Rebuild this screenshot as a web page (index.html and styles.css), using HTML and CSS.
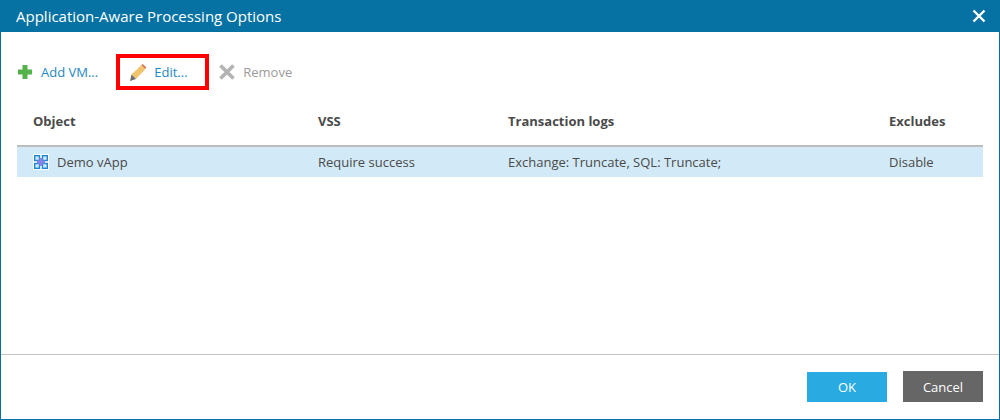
FILE: index.html
```html
<!DOCTYPE html>
<html lang="en">
<head>
    <meta charset="UTF-8">
    <title>Application-Aware Processing Options</title>
    <link rel="stylesheet" href="styles.css">
</head>
<body>

    <div class="dialog">
        <div class="titlebar">
            <span class="title">Application-Aware Processing Options</span>
            <svg class="close" width="14" height="14" viewBox="0 0 14 14"><path d="M1.5 1.5L12.5 12.5M12.5 1.5L1.5 12.5" stroke="#fff" stroke-width="2.4"/></svg>
        </div>

        <div class="toolbar">
            <a class="tool tool-add">
                <svg width="14" height="14" viewBox="0 0 14 14"><path d="M4.5 0h5v4.5H14v5H9.5V14h-5V9.5H0v-5h4.5z" fill="#53b34a"/></svg>
                <span>Add VM...</span>
            </a>
            <a class="tool tool-edit">
                <svg width="16" height="17" viewBox="0 0 16 17">
                    <path d="M1.5 10.5L11.5 1L15.5 5L6 15Z" fill="#f0c36d"/>
                    <path d="M11.5 1L12.5 0L16 3L15.5 5Z" fill="#d9694a"/>
                    <path d="M1.5 10.5L6 15L0 17Z" fill="#6e6e6e"/>
                </svg>
                <span>Edit...</span>
            </a>
            <a class="tool tool-remove">
                <svg width="16" height="16" viewBox="0 0 16 16"><path d="M1.5 1.5L14.5 14.5M14.5 1.5L1.5 14.5" stroke="#b4b4b4" stroke-width="3.8"/></svg>
                <span>Remove</span>
            </a>
        </div>

        <table class="grid">
            <thead>
                <tr>
                    <th class="col-object">Object</th>
                    <th class="col-vss">VSS</th>
                    <th class="col-logs">Transaction logs</th>
                    <th>Excludes</th>
                </tr>
            </thead>
            <tbody>
                <tr class="selected">
                    <td>
                        <span class="object-name">
                            <svg width="16" height="16" viewBox="0 0 16 16">
                                <rect width="16" height="16" fill="#fff"/>
                                <rect x="1.7" y="1.7" width="4.8" height="4.8" fill="#d2e9f7" stroke="#1b87cf" stroke-width="1.4"/>
                                <rect x="9.5" y="1.7" width="4.8" height="4.8" fill="#d2e9f7" stroke="#1b87cf" stroke-width="1.4"/>
                                <rect x="1.7" y="9.5" width="4.8" height="4.8" fill="#d2e9f7" stroke="#1b87cf" stroke-width="1.4"/>
                                <rect x="9.5" y="9.5" width="4.8" height="4.8" fill="#d2e9f7" stroke="#1b87cf" stroke-width="1.4"/>
                                <path d="M6.5 4h3v2.5H12v3H9.5V12h-3V9.5H4v-3h2.5z" fill="#8a84ea"/>
                            </svg>
                            Demo vApp
                        </span>
                    </td>
                    <td>Require success</td>
                    <td>Exchange: Truncate, SQL: Truncate;</td>
                    <td>Disable</td>
                </tr>
            </tbody>
        </table>

        <div class="footer">
            <button class="btn btn-ok">OK</button>
            <button class="btn btn-cancel">Cancel</button>
        </div>
    </div>

</body>
</html>
```

FILE: styles.css
```css
html, body {
    margin: 0;
    height: 100%;
}
body {
    font-family: "Open Sans", sans-serif;
    font-size: 13px;
    color: #4a4a4a;
    background-color: #fff;
}
.dialog {
    box-sizing: border-box;
    width: 1000px;
    height: 420px;
    border: 1px solid #0672a4;
    border-top: none;
    display: flex;
    flex-direction: column;
}
.titlebar {
    height: 32px;
    flex: none;
    margin: 0 -1px;
    background-color: #0672a4;
    color: #fff;
    display: flex;
    align-items: center;
    justify-content: space-between;
    padding: 0 14px 0 16px;
}
.title {
    font-size: 15px;
}
.close {
    display: block;
}
.toolbar {
    flex: none;
    display: flex;
    align-items: center;
    height: 36px;
    margin-top: 22px;
    padding-left: 17px;
}
.tool {
    display: flex;
    align-items: center;
    color: #2287c2;
}
.tool svg {
    display: block;
}
.tool-add svg {
    margin-right: 9px;
}
.tool-edit {
    box-sizing: border-box;
    height: 36px;
    width: 93px;
    margin-left: 18px;
    padding-left: 10px;
    border: 4px solid #f00;
}
.tool-edit svg {
    margin-right: 8px;
}
.tool-remove {
    margin-left: 10px;
    color: #9b9b9b;
}
.tool-remove svg {
    margin-right: 8px;
}
.grid {
    flex: none;
    width: 966px;
    margin: 0 0 0 16px;
    border-collapse: collapse;
    table-layout: fixed;
}
.grid th {
    height: 56px;
    padding: 0 0 15px 16px;
    box-sizing: border-box;
    vertical-align: bottom;
    text-align: left;
    font-weight: 700;
    border-bottom: 2px solid #bdbdbd;
}
.grid td {
    height: 30px;
    padding: 0 0 0 16px;
}
.col-object {
    width: 285px;
}
.col-vss {
    width: 190px;
}
.col-logs {
    width: 381px;
}
.selected {
    background-color: #d2e9f7;
}
.object-name {
    display: flex;
    align-items: center;
    gap: 8px;
}
.footer {
    margin-top: auto;
    height: 65px;
    box-sizing: border-box;
    border-top: 1px solid #c4c4c4;
    display: flex;
    justify-content: flex-end;
    align-items: flex-end;
    gap: 16px;
    padding: 0 16px 17px 0;
}
.btn {
    width: 80px;
    height: 30px;
    border: none;
    padding: 0;
    color: #fff;
    font-family: inherit;
    font-size: 13px;
}
.btn-ok {
    background-color: #29abe2;
}
.btn-cancel {
    height: 31px;
    background-color: #666;
}
```
